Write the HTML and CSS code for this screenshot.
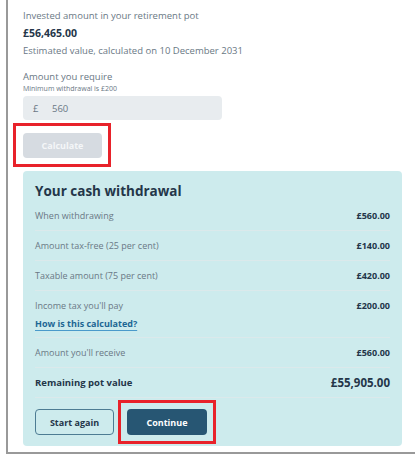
FILE: index.html
```html
<html>

<head>
    <title>Cash withdrawal</title>
    <link rel="stylesheet" href="styles.css">
</head>

<body>

    <div class="frame">
        <p class="label">Invested amount in your retirement pot</p>
        <p class="amount">£56,465.00</p>
        <p class="label estimate">Estimated value, calculated on 10 December 2031</p>

        <p class="label require">Amount you require</p>
        <p class="hint">Minimum withdrawal is £200</p>
        <div class="field">
            <span class="prefix">£</span>
            <span class="value">560</span>
        </div>

        <button class="btn calc marked">Calculate</button>

        <div class="card">
            <h2>Your cash withdrawal</h2>
            <div class="row">
                <span>When withdrawing</span>
                <b>£560.00</b>
            </div>
            <div class="row">
                <span>Amount tax-free (25 per cent)</span>
                <b>£140.00</b>
            </div>
            <div class="row">
                <span>Taxable amount (75 per cent)</span>
                <b>£420.00</b>
            </div>
            <div class="row tax">
                <div class="line">
                    <span>Income tax you'll pay</span>
                    <b>£200.00</b>
                </div>
                <a href="#" class="how">How is this calculated?</a>
            </div>
            <div class="row">
                <span>Amount you'll receive</span>
                <b>£560.00</b>
            </div>
            <div class="row total">
                <span>Remaining pot value</span>
                <b>£55,905.00</b>
            </div>
            <div class="actions">
                <button class="btn again">Start again</button>
                <button class="btn go marked">Continue</button>
            </div>
        </div>
    </div>

</body>

</html>
```

FILE: styles.css
```css
body {
    margin: 0;
    font-family: 'Open Sans', Lato, sans-serif;
    color: #243649;
}

.frame {
    margin-left: 6px;
    width: 400px;
    border: 2px solid #999;
    border-top: none;
    padding: 9px 0 6px 15px;
}

p {
    margin: 0;
}

.label {
    font-size: 9.5px;
    line-height: 14px;
    color: #6a7885;
}

.amount {
    margin-top: 3px;
    font-size: 10.5px;
    line-height: 14px;
    font-weight: bold;
}

.estimate {
    margin-top: 4px;
}

.require {
    margin-top: 12px;
}

.hint {
    font-size: 7px;
    line-height: 10px;
    color: #6a7885;
}

.field {
    display: flex;
    width: 199px;
    height: 24px;
    margin-top: 2px;
    border-radius: 4px;
    background-color: #e8ecef;
    font-size: 9.5px;
    color: #6a7885;
    align-items: center;
}

.prefix {
    width: 23px;
    padding-left: 10px;
    box-sizing: border-box;
}

.value {
    padding-left: 6px;
}

.btn {
    font-family: 'Open Sans', Lato, sans-serif;
    font-size: 9px;
    font-weight: bold;
    border-radius: 4px;
    height: 26px;
    width: 80px;
    padding: 0;
}

.marked {
    position: relative;
}

/* red annotation boxes from the screenshot */
.marked::after {
    content: "";
    position: absolute;
    inset: -9px;
    border: 3px solid #e8222a;
}

.calc {
    display: block;
    margin-top: 13px;
    height: 25px;
    width: 79px;
    border: none;
    background-color: #d6dbe1;
    color: #f4f6f8;
}

.calc::after {
    inset: -10px -9px -9px -10px;
}

.card {
    margin-top: 13px;
    width: 379px;
    box-sizing: border-box;
    padding: 10px 12px 11px 12px;
    border-radius: 4px;
    background-color: #cdebed;
}

h2 {
    margin: 0;
    font-size: 13.5px;
    line-height: 20px;
    font-weight: bold;
}

.row {
    display: flex;
    justify-content: space-between;
    padding: 7px 0;
    font-size: 9px;
    line-height: 15px;
    color: #6a7885;
    border-bottom: 1px solid #dbe9eb;
}

.row b {
    color: #243649;
}

.tax {
    display: block;
    padding-bottom: 6px;
}

.line {
    display: flex;
    justify-content: space-between;
}

.how {
    display: inline-block;
    margin-top: 3px;
    font-weight: bold;
    color: #1d6694;
    text-decoration: underline;
    text-decoration-color: #4a9acb;
    text-underline-offset: 3px;
}

.total {
    font-size: 9.5px;
    line-height: 15px;
}

.total span {
    font-weight: bold;
    color: #243649;
}

.total b {
    font-size: 11.5px;
}

.actions {
    display: flex;
    gap: 13px;
    margin-top: 11px;
}

.again {
    width: 79px;
    background-color: transparent;
    border: 1px solid #4d7c93;
    color: #243649;
}

.go {
    border: none;
    background-color: #275673;
    color: #fff;
}
```
